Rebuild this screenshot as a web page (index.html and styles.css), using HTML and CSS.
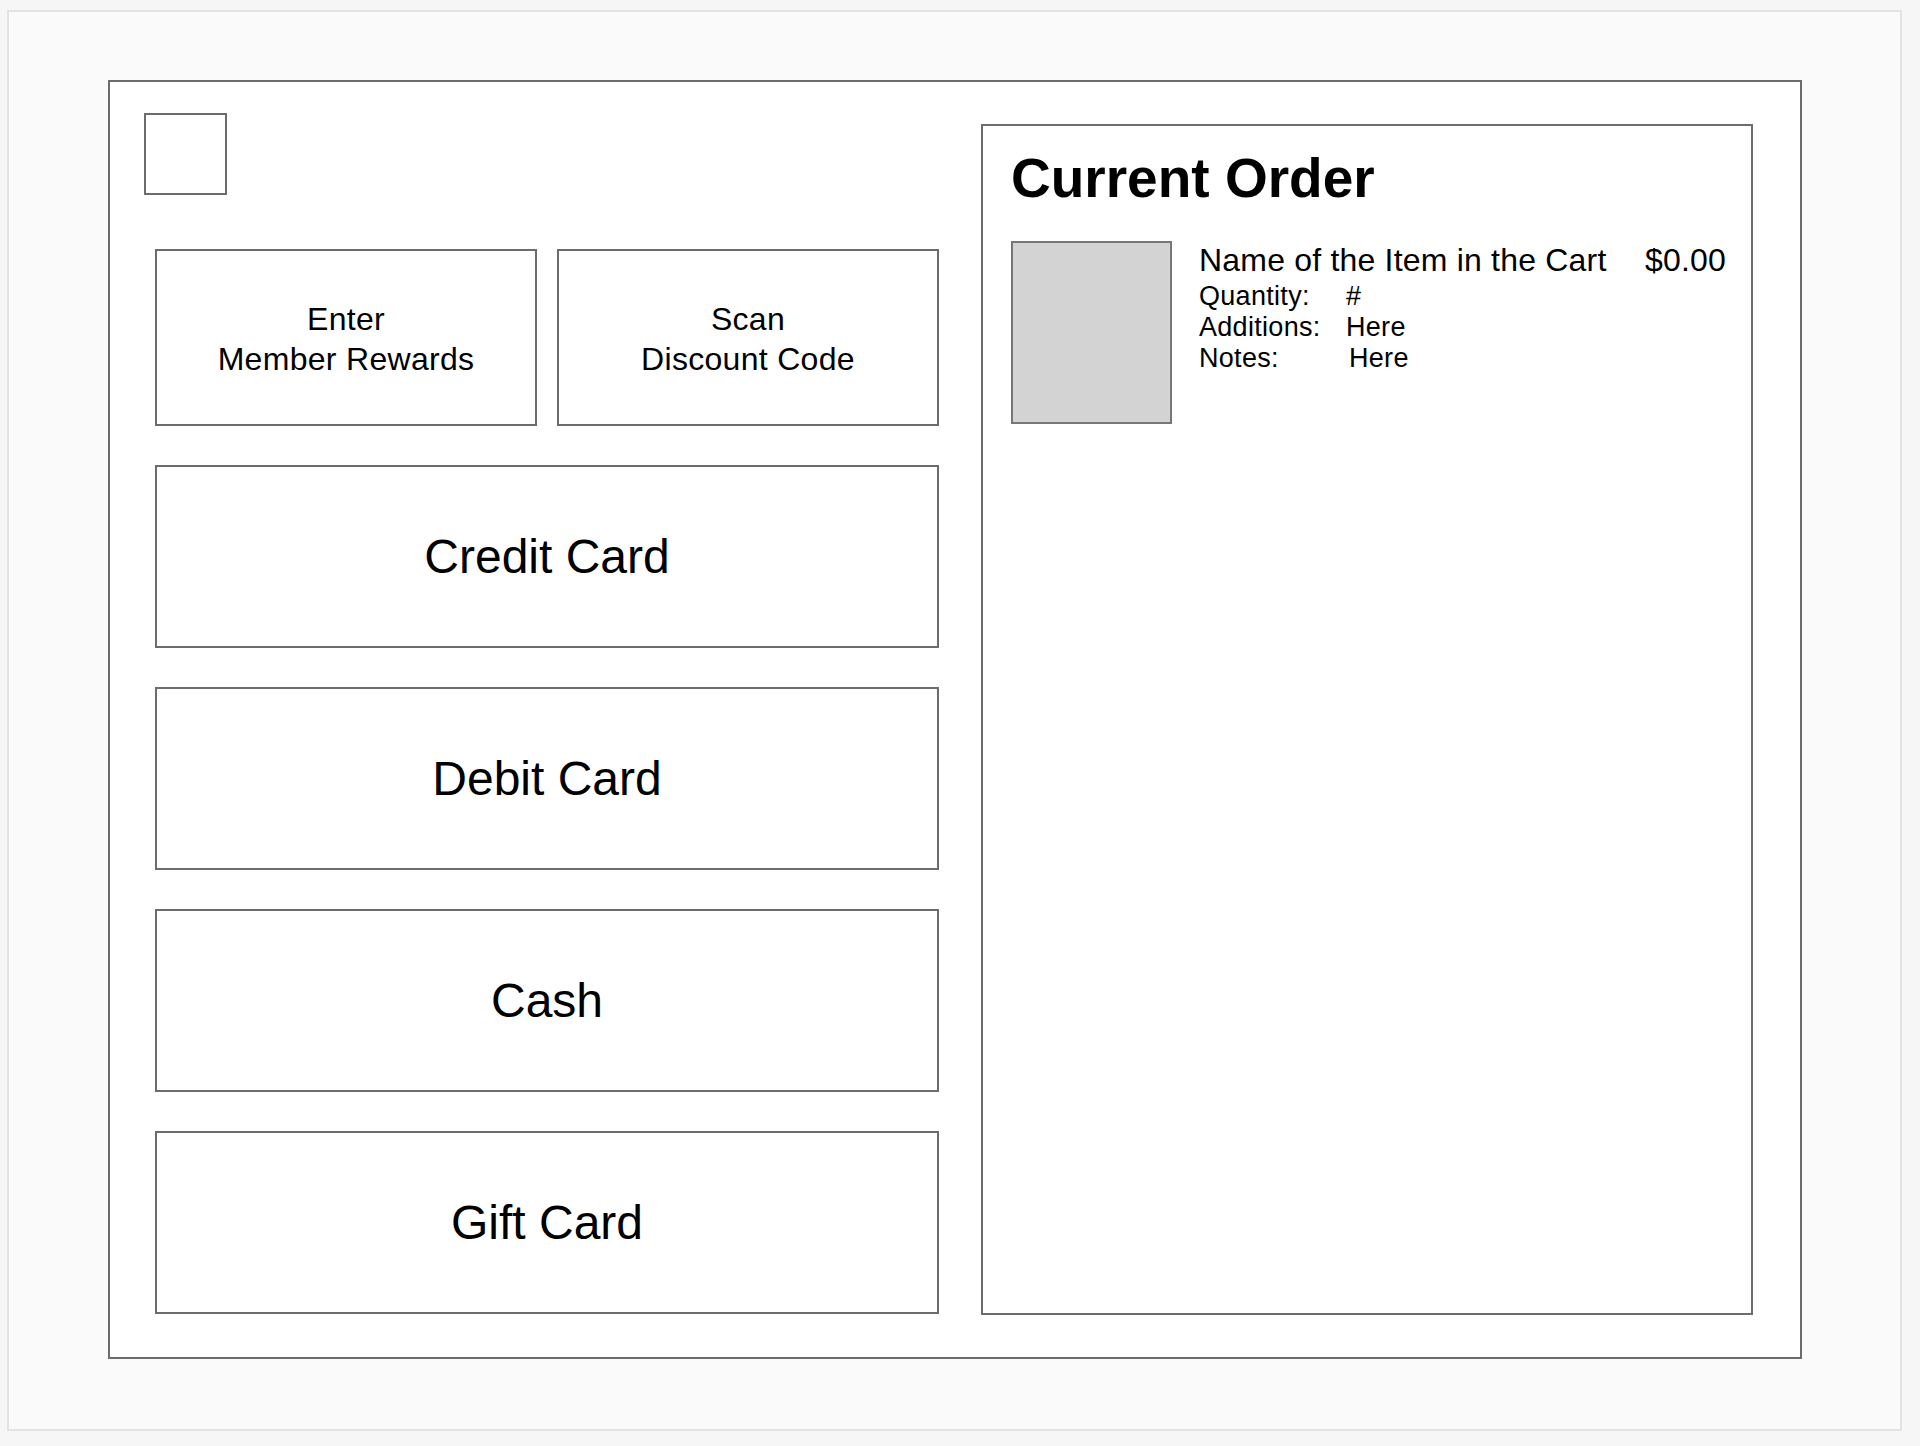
FILE: index.html
```html
<!DOCTYPE html>
<html lang="en">
<head>
<meta charset="utf-8">
<title>Payment</title>
<link rel="stylesheet" href="styles.css">
</head>
<body>
<div class="frame">
  <div class="screen">
    <div class="left">
      <div class="logo"></div>
      <div class="buttons">
        <div class="row">
          <div class="btn small">Enter<br>Member Rewards</div>
          <div class="btn small">Scan<br>Discount Code</div>
        </div>
        <div class="btn big">Credit Card</div>
        <div class="btn big">Debit Card</div>
        <div class="btn big">Cash</div>
        <div class="btn big">Gift Card</div>
      </div>
    </div>
    <div class="order">
      <h1 class="title">Current Order</h1>
      <div class="item">
        <div class="thumb"></div>
        <div class="details">
          <div class="name-row">
            <span class="name">Name of the Item in the Cart</span>
            <span class="price">$0.00</span>
          </div>
          <div class="props">
            <span class="label">Quantity:</span><span class="value">#</span>
            <span class="label">Additions:</span><span class="value">Here</span>
            <span class="label">Notes:</span><span class="value notes">Here</span>
          </div>
        </div>
      </div>
    </div>
  </div>
</div>
</body>
</html>
```

FILE: styles.css
```css
html, body {
  margin: 0;
  padding: 0;
}
body {
  background: #f6f6f6;
  font-family: "Liberation Sans", Arial, Helvetica, sans-serif;
  color: #000;
  width: 1920px;
  height: 1446px;
  overflow: hidden;
}
.frame {
  box-sizing: border-box;
  margin: 10px 0 0 7px;
  width: 1895px;
  height: 1421px;
  border: 2px solid #e3e3e3;
  background: #fafafa;
  padding: 68px 0 0 99px;
}
.screen {
  box-sizing: border-box;
  width: 1694px;
  height: 1279px;
  border: 2px solid #6c6c6c;
  background: #fff;
  padding: 31px 47px 42px 34px;
  display: flex;
  align-items: stretch;
}
.left {
  display: flex;
  flex-direction: column;
  width: 795px;
  flex: none;
}
.logo {
  box-sizing: border-box;
  width: 83px;
  height: 82px;
  border: 2px solid #6c6c6c;
}
.buttons {
  margin: 54px 0 0 11px;
  width: 784px;
  display: flex;
  flex-direction: column;
  gap: 39px;
}
.row {
  display: flex;
  gap: 20px;
}
.btn {
  box-sizing: border-box;
  border: 2px solid #6c6c6c;
  display: flex;
  align-items: center;
  justify-content: center;
  text-align: center;
}
.small {
  width: 382px;
  height: 177px;
  padding-top: 2px;
  font-size: 32px;
  letter-spacing: 0.3px;
  line-height: 40px;
}
.big {
  height: 183px;
  font-size: 48px;
}
.order {
  box-sizing: border-box;
  flex: 1;
  margin: 11px 0 0 42px;
  border: 2px solid #6c6c6c;
  padding: 24px 25px 0 28px;
}
.title {
  margin: 0;
  font-size: 55px;
  font-weight: bold;
  line-height: 56px;
}
.item {
  margin-top: 35px;
  display: flex;
  align-items: flex-start;
}
.thumb {
  box-sizing: border-box;
  width: 161px;
  height: 183px;
  background: #d3d3d3;
  border: 2px solid #777;
  flex: none;
}
.details {
  flex: 1;
  margin-left: 27px;
}
.name-row {
  display: flex;
  justify-content: space-between;
  font-size: 32px;
  letter-spacing: 0.2px;
  line-height: 38px;
}
.props {
  margin-top: 2px;
  display: grid;
  grid-template-columns: 147px auto;
  justify-content: start;
  font-size: 27px;
  letter-spacing: 0.3px;
  line-height: 31px;
}
.notes {
  padding-left: 3px;
}
```
